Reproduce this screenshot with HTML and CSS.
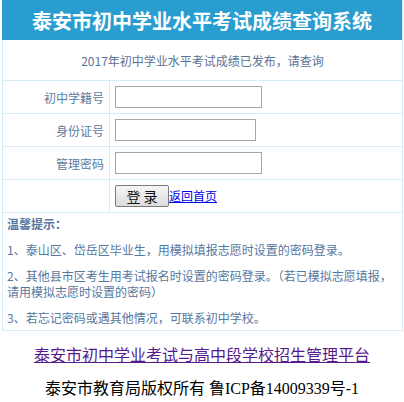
FILE: index.html
```html
<!DOCTYPE html>
<html lang="zh-CN">
<head>
<meta charset="utf-8">
<title>泰安市初中学业水平考试成绩查询系统</title>
<link rel="stylesheet" href="styles.css">
</head>
<body>
<div class="wrap">
  <div class="head">泰安市初中学业水平考试成绩查询系统</div>
  <div class="notice">2017年初中学业水平考试成绩已发布，请查询</div>
  <div class="row">
    <div class="label">初中学籍号</div>
    <div class="field"><input class="inp" type="text"></div>
  </div>
  <div class="row">
    <div class="label">身份证号</div>
    <div class="field"><input class="inp inp-short" type="text"></div>
  </div>
  <div class="row">
    <div class="label">管理密码</div>
    <div class="field"><input class="inp" type="password"></div>
  </div>
  <div class="row">
    <div class="label"></div>
    <div class="field"><button class="btn" type="button">登 录</button><a class="back" href="#">返回首页</a></div>
  </div>
  <div class="tips">
    <p class="tips-title">温馨提示：</p>
    <p>1、泰山区、岱岳区毕业生，用模拟填报志愿时设置的密码登录。</p>
    <p>2、其他县市区考生用考试报名时设置的密码登录。（若已模拟志愿填报，<br>请用模拟志愿时设置的密码）</p>
    <p>3、若忘记密码或遇其他情况，可联系初中学校。</p>
  </div>
</div>
<div class="footer">
  <a class="platform" href="#">泰安市初中学业考试与高中段学校招生管理平台</a>
  <div class="copy">泰安市教育局版权所有 鲁ICP备14009339号-1</div>
</div>
</body>
</html>
```
FILE: styles.css
```css
html, body {
  margin: 0;
  padding: 0;
  background: #fff;
}
body {
  font-family: "Noto Sans CJK SC", "Liberation Sans", sans-serif;
  font-size: 12px;
}
.wrap {
  margin-left: 2px;
  width: 401px;
  box-sizing: border-box;
  border: 1px solid #d6ecf6;
  border-top: 0;
}
.head {
  margin-left: -1px;
  height: 40px;
  background: #2a9dd0;
  color: #fff;
  font-size: 20px;
  font-weight: bold;
  display: flex;
  align-items: center;
  justify-content: center;
}
.notice {
  height: 40px;
  border-bottom: 1px solid #d6ecf6;
  display: flex;
  align-items: center;
  justify-content: center;
  color: #5b7396;
}
.row {
  display: grid;
  grid-template-columns: 107px 1fr;
  height: 33px;
  box-sizing: border-box;
  border-bottom: 1px solid #d6ecf6;
}
.label {
  border-right: 1px solid #d6ecf6;
  display: flex;
  align-items: center;
  justify-content: flex-end;
  padding-right: 5px;
  color: #5b7ba0;
  font-size: 12px;
}
.field {
  display: flex;
  align-items: center;
  padding-left: 5px;
}
.inp {
  width: 147px;
  height: 22px;
  box-sizing: border-box;
  border: 1px solid #a6a6a6;
  margin: 0;
  padding: 0 2px;
  font: inherit;
}
.inp-short {
  width: 141px;
}
.btn {
  width: 54px;
  height: 22px;
  box-sizing: border-box;
  border: 1px solid #7a7a7a;
  border-radius: 2px;
  background: linear-gradient(#f6f6f6, #dcdcdc);
  font-family: "Noto Sans CJK SC", sans-serif;
  font-size: 14px;
  line-height: 18px;
  color: #111;
  padding: 0;
  margin: 0;
}
.back {
  color: #0000ee;
  text-decoration: underline;
  font-size: 12px;
  align-self: flex-end;
  margin-bottom: 9px;
  line-height: 14px;
}
.tips {
  padding: 3px 2px 4px 4px;
  color: #56779f;
  line-height: 16px;
}
.tips p {
  margin: 10px 0 0;
}
.tips .tips-title {
  margin-top: 0;
  font-weight: bold;
  font-size: 12px;
}
.footer {
  text-align: center;
  margin-top: 13px;
}
.platform {
  display: inline-block;
  font-size: 16px;
  line-height: 20px;
  color: #551a8b;
  text-decoration: underline;
}
.copy {
  margin-top: 15px;
  font-family: "Liberation Serif", "Noto Sans CJK SC", serif;
  font-size: 16px;
  line-height: 20px;
  color: #000;
}
```
